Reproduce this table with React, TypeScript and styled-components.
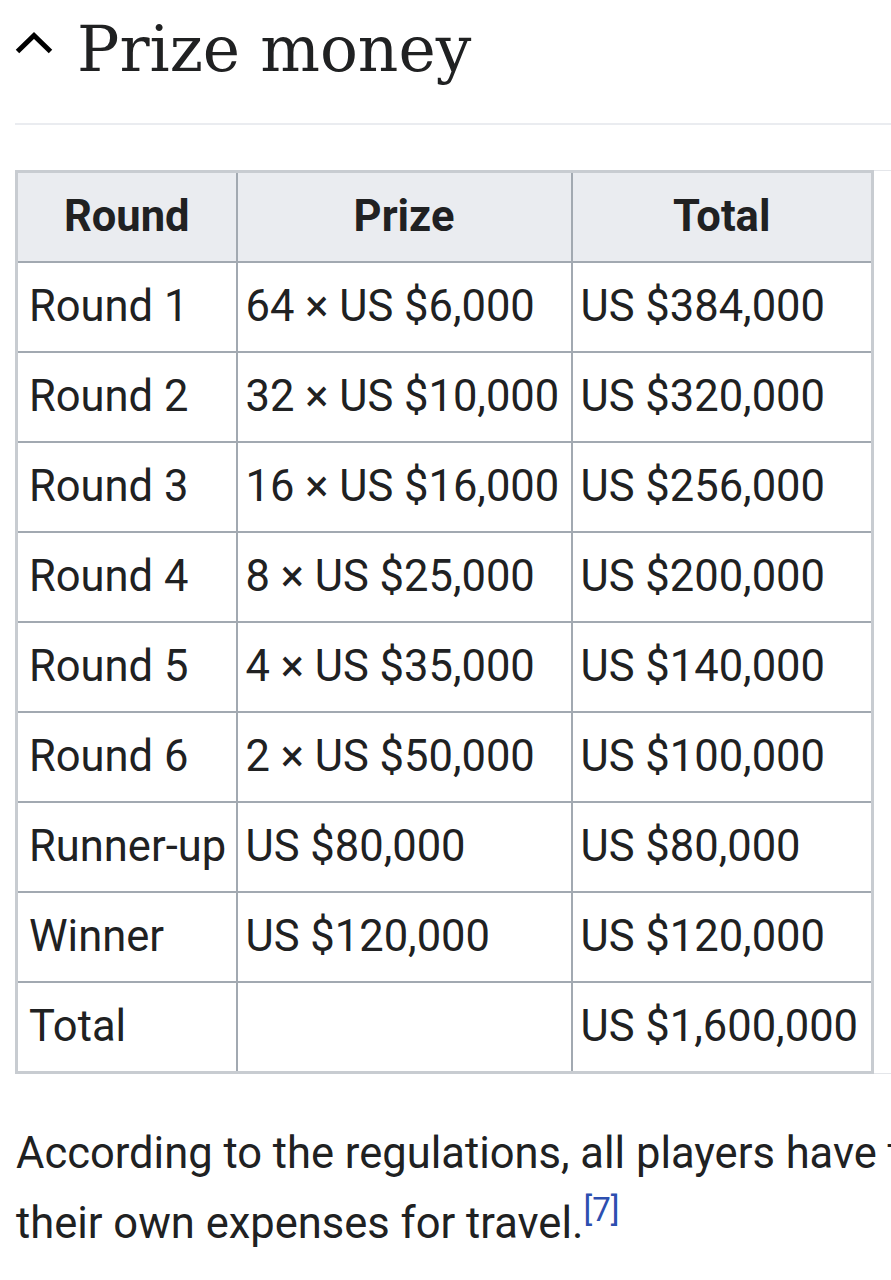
import React from "react";
import styled, { createGlobalStyle } from "styled-components";

const GlobalStyle = createGlobalStyle`
  html, body {
    margin: 0;
    padding: 0;
    background: #ffffff;
    overflow: hidden;
  }
  body {
    font-family: Roboto, "Liberation Sans", sans-serif;
    color: #202122;
  }
`;

const Page = styled.div`
  width: 1020px;
  padding-left: 15px;
  box-sizing: border-box;
`;

const SectionHeader = styled.div`
  display: flex;
  align-items: flex-start;
`;

const Chevron = styled.svg`
  flex: 0 0 auto;
  width: 38px;
  height: 22px;
  margin-top: 32px;
  margin-right: 24px;
`;

const Heading = styled.h2`
  margin: 18px 0 0 0;
  font-family: "DejaVu Serif", "Liberation Serif", serif;
  font-weight: 400;
  font-size: 63px;
  line-height: 63px;
  color: #202122;
`;

const Rule = styled.div`
  margin-top: 42px;
  height: 2px;
  background: #eaecf0;
`;

const TableScroller = styled.div`
  margin-top: 45px;
  display: flex;
  border-top: 1px solid #e4e6ea;
  border-bottom: 1px solid #e4e6ea;
`;

const PrizeTable = styled.table`
  width: 858px;
  border-collapse: collapse;
  table-layout: fixed;
  border: 3px solid #c8ccd1;
  font-size: 43.5px;
  color: #202122;
  margin-top: -1px;
  margin-bottom: -1px;
`;

const HeadCell = styled.th`
  background: #eaecf0;
  border: 2px solid #a2a9b1;
  font-weight: 700;
  text-align: center;
  line-height: 88px;
  padding: 0 10px;
  white-space: nowrap;
`;

const Cell = styled.td<{ $first?: boolean }>`
  border: 2px solid #a2a9b1;
  text-align: left;
  line-height: 88px;
  padding: 0 10px 0 ${(p) => (p.$first ? "11px" : "8px")};
  white-space: nowrap;
`;

const Paragraph = styled.p`
  margin: 45px 0 0 1px;
  font-size: 43.5px;
  line-height: 70px;
  color: #202122;
`;

const Ref = styled.sup`
  font-size: 33px;
  line-height: 1;
  vertical-align: 17px;
  margin-left: 0;
  color: #2d4fb0;
`;

const rows: [string, string, string][] = [
  ["Round 1", "64 × US $6,000", "US $384,000"],
  ["Round 2", "32 × US $10,000", "US $320,000"],
  ["Round 3", "16 × US $16,000", "US $256,000"],
  ["Round 4", "8 × US $25,000", "US $200,000"],
  ["Round 5", "4 × US $35,000", "US $140,000"],
  ["Round 6", "2 × US $50,000", "US $100,000"],
  ["Runner-up", "US $80,000", "US $80,000"],
  ["Winner", "US $120,000", "US $120,000"],
  ["Total", "", "US $1,600,000"],
];

export default function App() {
  return (
    <>
      <GlobalStyle />
      <Page>
        <SectionHeader>
          <Chevron viewBox="0 0 38 22">
            <polyline
              points="2.5,19.5 19,3.5 35.5,19.5"
              fill="none"
              stroke="#000"
              strokeWidth="5"
            />
          </Chevron>
          <Heading>Prize money</Heading>
        </SectionHeader>
        <Rule />
        <TableScroller>
          <PrizeTable>
            <colgroup>
              <col style={{ width: 220 }} />
              <col style={{ width: 335 }} />
              <col style={{ width: 301 }} />
            </colgroup>
            <thead>
              <tr>
                <HeadCell>Round</HeadCell>
                <HeadCell>Prize</HeadCell>
                <HeadCell>Total</HeadCell>
              </tr>
            </thead>
            <tbody>
              {rows.map((r) => (
                <tr key={r[0]}>
                  <Cell $first>{r[0]}</Cell>
                  <Cell>{r[1]}</Cell>
                  <Cell>{r[2]}</Cell>
                </tr>
              ))}
            </tbody>
          </PrizeTable>
        </TableScroller>
        <Paragraph>
          According to the regulations, all players have to pay their own
          expenses for travel.<Ref>[7]</Ref>
        </Paragraph>
      </Page>
    </>
  );
}
